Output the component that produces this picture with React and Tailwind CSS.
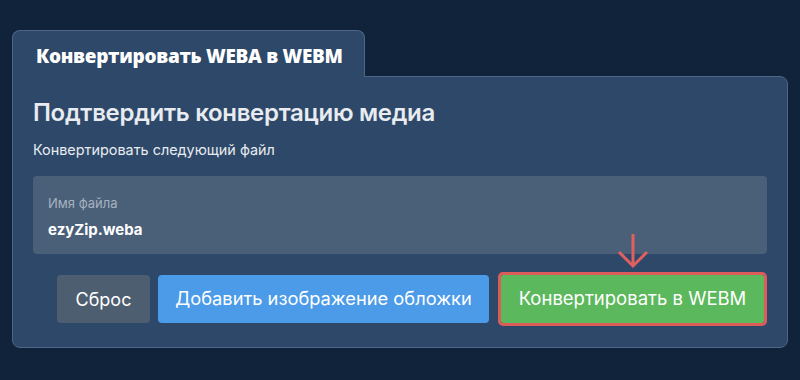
export default function App() {
  return (
    <div
      className="w-[800px] h-[380px] bg-[#10233a] pt-[30px] px-[12px]"
      style={{ fontFamily: 'Inter, "Noto Sans", sans-serif' }}
    >
      <div className="w-[776px]">
        <div className="relative z-10 -mb-px w-[353px] h-[47px] bg-[#2d4869] border-t border-x border-[#4d6687] rounded-t-lg pl-[23px] pt-[4px] flex items-center">
          <span
            className="text-[19px] font-extrabold text-white tracking-[-0.3px]"
            style={{ fontFamily: '"Open Sans", sans-serif' }}
          >
            Конвертировать WEBA в WEBM
          </span>
        </div>
        <div className="relative bg-[#2d4869] border border-[#4d6687] rounded-b-lg rounded-tr-lg h-[272px] px-[20px] pt-[20px]">
          <h1 className="text-[24px] leading-[32px] font-semibold text-[#e8ebef] tracking-[-0.3px]">Подтвердить конвертацию медиа</h1>
          <p className="mt-[11px] text-[14.4px] leading-[20px] text-[#e8ebef]">Конвертировать следующий файл</p>
          <div className="mt-[16px] h-[78px] bg-[#4a5f78] rounded-[4px] px-[15px] pt-[18px]">
            <div className="text-[13px] leading-[18px] text-[#a7b2c0]">Имя файла</div>
            <div className="mt-[8px] text-[15px] leading-[20px] font-bold text-white">ezyZip.weba</div>
          </div>
          <div className="mt-[21px] flex justify-end pr-[3px]">
            <button className="h-[48px] w-[93px] bg-[#4d5e70] rounded-[4px] text-[18px] text-white">Сброс</button>
            <button className="ml-[8px] h-[48px] w-[331px] bg-[#4b9be8] rounded-[4px] text-[18.3px] text-white">Добавить изображение обложки</button>
            <div className="relative ml-[12px]">
              <svg className="absolute left-1/2 -translate-x-1/2 -top-[42px]" width="32" height="36" viewBox="0 0 32 36" fill="none">
                <path d="M16 1 V33 M2 19 L16 33 L30 19" stroke="#e06060" strokeWidth="3" />
              </svg>
              <button className="h-[48px] w-[263px] bg-[#5cb85c] rounded-[2px] text-[18.5px] text-white outline-[3.5px] outline-solid outline-[#dc5c5a] outline-offset-0">Конвертировать в WEBM</button>
            </div>
          </div>
        </div>
      </div>
    </div>
  )
}
